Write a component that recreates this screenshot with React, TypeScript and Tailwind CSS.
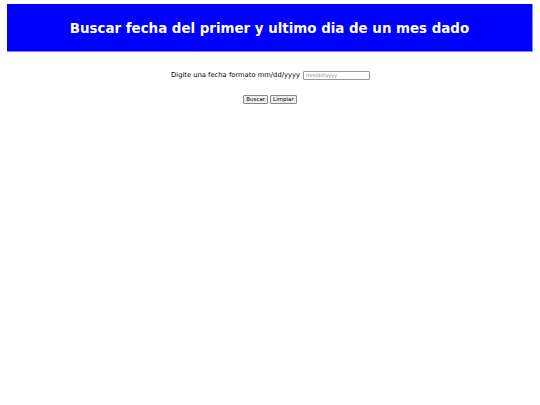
import React from "react";

export default function App() {
  return (
    <div className="min-h-[405px] bg-white font-['DejaVu_Sans',sans-serif] text-black">
      <div className="pt-[4px] px-[7px]">
        <div className="h-[48px] bg-[#0000ff] border-r border-b border-[#8080ff] flex items-center justify-center pt-[3px]">
          <h1 className="text-white font-bold text-[13.4px]">Buscar fecha del primer y ultimo dia de un mes dado</h1>
        </div>
      </div>
      <div className="mt-[18px] flex justify-center items-center gap-[3px] pl-[1px]">
        <span className="text-[6.75px]">Digite una fecha formato mm/dd/yyyy</span>
        <input
          type="text"
          placeholder="mm/dd/yyyy"
          className="w-[67px] h-[9px] border border-[#999] rounded-[1px] px-[2px] text-[5px] placeholder:text-[#888] outline-none"
        />
      </div>
      <div className="mt-[15px] flex justify-center gap-[2px]">
        <button className="h-[9px] px-[2px] text-[5.5px] bg-[#efefef] border border-[#888] rounded-[1px] leading-none">Buscar</button>
        <button className="h-[9px] px-[2px] text-[5.5px] bg-[#efefef] border border-[#888] rounded-[1px] leading-none">Limpiar</button>
      </div>
    </div>
  );
}
